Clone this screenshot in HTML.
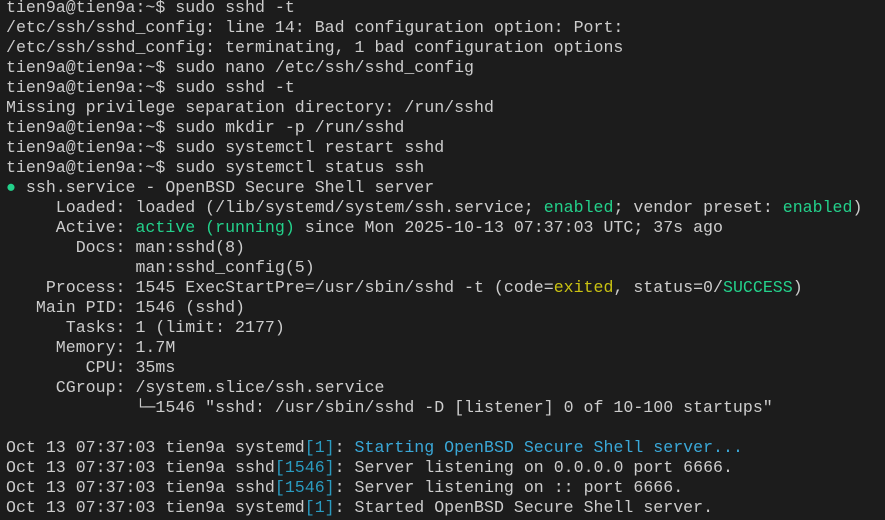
<!DOCTYPE html><html><head><style>
html,body{margin:0;padding:0;background:#1c1c1c;width:885px;height:520px;overflow:hidden}
pre{margin:0;position:absolute;left:6px;top:-2px;font-family:"Liberation Mono",monospace;font-size:16.6px;line-height:20px;color:#cccccc}
.g{color:#23d18b}.b{color:#2a9bc0}.c{color:#3aa8d8}.y{color:#c9c212}
</style></head><body><pre>tien9a@tien9a:~$ sudo sshd -t
/etc/ssh/sshd_config: line 14: Bad configuration option: Port:
/etc/ssh/sshd_config: terminating, 1 bad configuration options
tien9a@tien9a:~$ sudo nano /etc/ssh/sshd_config
tien9a@tien9a:~$ sudo sshd -t
Missing privilege separation directory: /run/sshd
tien9a@tien9a:~$ sudo mkdir -p /run/sshd
tien9a@tien9a:~$ sudo systemctl restart sshd
tien9a@tien9a:~$ sudo systemctl status ssh
<span class="g">●</span> ssh.service - OpenBSD Secure Shell server
     Loaded: loaded (/lib/systemd/system/ssh.service; <span class="g">enabled</span>; vendor preset: <span class="g">enabled</span>)
     Active: <span class="g">active (running)</span> since Mon 2025-10-13 07:37:03 UTC; 37s ago
       Docs: man:sshd(8)
             man:sshd_config(5)
    Process: 1545 ExecStartPre=/usr/sbin/sshd -t (code=<span class="y">exited</span>, status=0/<span class="g">SUCCESS</span>)
   Main PID: 1546 (sshd)
      Tasks: 1 (limit: 2177)
     Memory: 1.7M
        CPU: 35ms
     CGroup: /system.slice/ssh.service
             └─1546 "sshd: /usr/sbin/sshd -D [listener] 0 of 10-100 startups"

Oct 13 07:37:03 tien9a systemd<span class="b">[1]</span>: <span class="c">Starting OpenBSD Secure Shell server...</span>
Oct 13 07:37:03 tien9a sshd<span class="b">[1546]</span>: Server listening on 0.0.0.0 port 6666.
Oct 13 07:37:03 tien9a sshd<span class="b">[1546]</span>: Server listening on :: port 6666.
Oct 13 07:37:03 tien9a systemd<span class="b">[1]</span>: Started OpenBSD Secure Shell server.</pre></body></html>
